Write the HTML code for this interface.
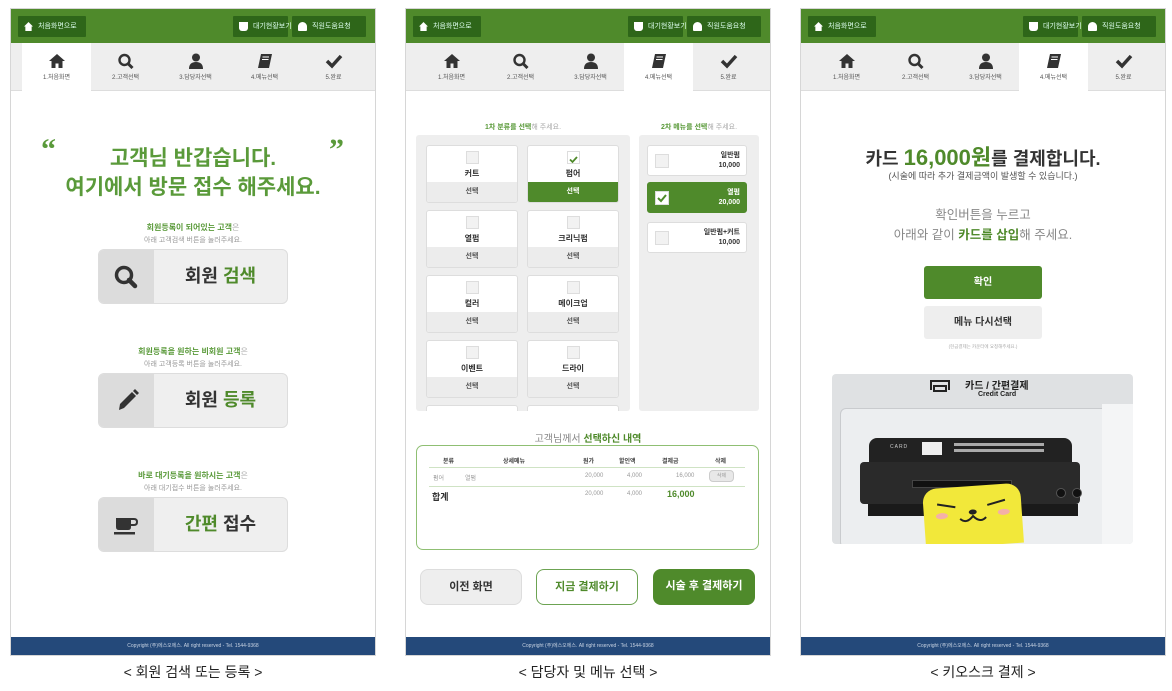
<!DOCTYPE html>
<html><head><meta charset="utf-8">
<style>
*{margin:0;padding:0;box-sizing:border-box}
body{width:1172px;height:691px;background:#fff;position:relative;overflow:hidden;font-family:"Liberation Sans","Noto Sans CJK KR",sans-serif;color:#333}
.a{position:absolute}
.panel{position:absolute;top:8px;width:366px;height:648px;border:1px solid #d6d6d6;background:#fff;overflow:hidden}
.hdr{position:absolute;left:0;top:0;width:100%;height:34px;background:#4f8a2b}
.hb{position:absolute;top:7px;height:21px;background:#2e6619;color:#dfe;font-size:7px;line-height:21px;padding-left:20px;border-radius:1px;white-space:nowrap}
.hb i{position:absolute;left:6px;top:6px;width:9px;height:9px;background:#fff}
.tabs{position:absolute;left:0;top:34px;width:100%;height:48px;background:#eeeeee;border-bottom:1px solid #ddd}
.tab{position:absolute;top:0;width:69px;height:48px;text-align:center;font-size:6px;color:#555}
.tab.on{background:#fff;height:49px}
.tab svg{display:block;margin:10px auto 3px}
.foot{position:absolute;left:0;bottom:0;width:100%;height:18px;background:#24497a;color:#c8d3e3;font-size:5px;line-height:18px;text-align:center}
.cap{position:absolute;top:662px;font-size:14px;color:#222;text-align:center;width:366px}
.g{color:#4f8a2b}
.bigbtn{position:absolute;left:87px;width:190px;height:55px;border:1px solid #ddd;border-radius:6px;background:#efefef;overflow:hidden}
.bigbtn .ic{position:absolute;left:0;top:0;width:55px;height:100%;background:#dcdcdc}
.bigbtn .t{position:absolute;left:55px;right:0;top:0;line-height:53px;text-align:center;font-size:18px;font-weight:bold;color:#333}
.sm1{position:absolute;left:0;width:100%;text-align:center;font-size:8px;font-weight:bold;color:#5a9a3a}
.sm1 span{color:#aaa;font-weight:normal}
.sm2{position:absolute;left:0;width:100%;text-align:center;font-size:7px;color:#999}
.card{position:absolute;width:92px;height:58px;background:#fff;border:1px solid #ddd;border-radius:3px;overflow:hidden;text-align:center}
.card .cb{position:absolute;left:39px;top:5px;width:13px;height:13px;border:1px solid #ddd;background:#f2f2f2}
.card .n{position:absolute;top:22px;width:100%;font-size:8px;font-weight:bold;color:#333}
.card .s{position:absolute;left:0;bottom:0;width:100%;height:20px;background:#ececec;font-size:7px;line-height:20px;font-weight:bold;color:#555}
.card.on .s{background:#4f8a2b;color:#fff}
.it{position:absolute;left:8px;width:100px;height:31px;background:#fff;border:1px solid #ddd;border-radius:3px;font-size:7px;font-weight:bold;text-align:right;padding:5px 6px 0 0;line-height:10px;color:#333}
.it .cb{position:absolute;left:7px;top:8px;width:14px;height:14px;border:1px solid #ddd;background:#f2f2f2}
.it.on{background:#4f8a2b;color:#fff;border-color:#4f8a2b}
.it.on .cb{background:#fff}
.row{position:absolute;left:0;width:100%;font-size:6px}
.row span{position:absolute}
.b3{position:absolute;top:560px;width:102px;height:36px;border-radius:8px;font-size:11px;font-weight:bold;text-align:center;line-height:34px}
</style></head><body>

<!-- PANEL 1 -->
<div class="panel" style="left:10px">
 <div class="hdr">
  <div class="hb" style="left:7px;width:68px"><i style="clip-path:polygon(50% 0,100% 50%,85% 50%,85% 100%,15% 100%,15% 50%,0 50%)"></i>처음화면으로</div>
  <div class="hb" style="left:222px;width:55px"><i style="border-radius:0 0 3px 3px"></i>대기현황보기</div>
  <div class="hb" style="left:281px;width:74px"><i style="border-radius:50% 50% 1px 1px"></i>직원도움요청</div>
 </div>
 <div class="tabs">
  <div class="tab on" style="left:11px"><svg width="18" height="16" viewBox="0 0 18 16"><path d="M9 1 L1 8 H3.5 V15 H7.5 V10.5 H10.5 V15 H14.5 V8 H17Z" fill="#333"/></svg>1.처음화면</div>
  <div class="tab" style="left:80px"><svg width="18" height="16" viewBox="0 0 18 16"><circle cx="7.5" cy="7" r="5" stroke="#333" stroke-width="2.4" fill="none"/><path d="M11 10.5 L15.5 15" stroke="#333" stroke-width="3"/></svg>2.고객선택</div>
  <div class="tab" style="left:150px"><svg width="18" height="16" viewBox="0 0 18 16"><circle cx="9" cy="4.5" r="4" fill="#333"/><path d="M2 16 Q2 9 9 9 Q16 9 16 16Z" fill="#333"/></svg>3.담당자선택</div>
  <div class="tab" style="left:219px"><svg width="18" height="16" viewBox="0 0 18 16"><path d="M5 1 H16 L13 15 H2Z" fill="#333"/><path d="M6.5 4 H13 M6 6.5 H12.5" stroke="#fff" stroke-width="1"/></svg>4.메뉴선택</div>
  <div class="tab" style="left:288px"><svg width="18" height="16" viewBox="0 0 18 16"><path d="M2 8 L7 13 L16 3" stroke="#333" stroke-width="3.5" fill="none"/></svg>5.완료</div>
 </div>
 <div class="a" style="left:30px;top:124px;font-size:30px;font-weight:bold;color:#5a9a3a;font-family:'Liberation Serif',serif">“</div>
 <div class="a" style="left:318px;top:124px;font-size:30px;font-weight:bold;color:#5a9a3a;font-family:'Liberation Serif',serif">”</div>
 <div class="a" style="left:0;width:100%;top:135px;text-align:center;font-size:21px;font-weight:bold;color:#5a9a3a;line-height:29px">고객님 반갑습니다.<br>여기에서 방문 접수 해주세요.</div>

 <div class="sm1" style="top:213px">회원등록이 되어있는 고객<span>은</span></div>
 <div class="sm2" style="top:226px">아래 고객검색 버튼을 눌러주세요.</div>
 <div class="bigbtn" style="top:240px"><div class="ic"><svg width="55" height="55" viewBox="0 0 55 55"><circle cx="25" cy="25" r="7.5" stroke="#333" stroke-width="3.5" fill="none"/><path d="M30 30 L36 36" stroke="#333" stroke-width="4.5" stroke-linecap="round"/></svg></div><div class="t">회원 <span class="g">검색</span></div></div>

 <div class="sm1" style="top:337px">회원등록을 원하는 비회원 고객<span>은</span></div>
 <div class="sm2" style="top:350px">아래 고객등록 버튼을 눌러주세요.</div>
 <div class="bigbtn" style="top:364px"><div class="ic"><svg width="55" height="55" viewBox="0 0 55 55"><path d="M20 36 L21 30 L33 18 L37 22 L25 34Z" fill="#333"/><path d="M34 17 L36 15 L40 19 L38 21Z" fill="#333"/></svg></div><div class="t">회원 <span class="g">등록</span></div></div>

 <div class="sm1" style="top:461px">바로 대기등록을 원하시는 고객<span>은</span></div>
 <div class="sm2" style="top:474px">아래 대기접수 버튼을 눌러주세요.</div>
 <div class="bigbtn" style="top:488px"><div class="ic"><svg width="55" height="55" viewBox="0 0 55 55"><path d="M17 20 H32 V29 Q32 32 29 32 H20 Q17 32 17 29Z" fill="#333"/><path d="M32 21 H35 Q38 21 38 24 Q38 27 35 27 H32" stroke="#333" stroke-width="2" fill="none"/><rect x="15" y="34" width="21" height="2.5" fill="#333"/></svg></div><div class="t"><span class="g">간편</span> 접수</div></div>

 <div class="foot">Copyright (주)에스오에스. All right reserved - Tel. 1544-9368</div>
</div>
<div class="cap" style="left:10px">&lt; 회원 검색 또는 등록 &gt;</div>

<!-- PANEL 2 -->
<div class="panel" style="left:405px">
 <div class="hdr">
  <div class="hb" style="left:7px;width:68px"><i style="clip-path:polygon(50% 0,100% 50%,85% 50%,85% 100%,15% 100%,15% 50%,0 50%)"></i>처음화면으로</div>
  <div class="hb" style="left:222px;width:55px"><i style="border-radius:0 0 3px 3px"></i>대기현황보기</div>
  <div class="hb" style="left:281px;width:74px"><i style="border-radius:50% 50% 1px 1px"></i>직원도움요청</div>
 </div>
 <div class="tabs">
  <div class="tab" style="left:11px"><svg width="18" height="16" viewBox="0 0 18 16"><path d="M9 1 L1 8 H3.5 V15 H7.5 V10.5 H10.5 V15 H14.5 V8 H17Z" fill="#333"/></svg>1.처음화면</div>
  <div class="tab" style="left:80px"><svg width="18" height="16" viewBox="0 0 18 16"><circle cx="7.5" cy="7" r="5" stroke="#333" stroke-width="2.4" fill="none"/><path d="M11 10.5 L15.5 15" stroke="#333" stroke-width="3"/></svg>2.고객선택</div>
  <div class="tab" style="left:150px"><svg width="18" height="16" viewBox="0 0 18 16"><circle cx="9" cy="4.5" r="4" fill="#333"/><path d="M2 16 Q2 9 9 9 Q16 9 16 16Z" fill="#333"/></svg>3.담당자선택</div>
  <div class="tab on" style="left:218px"><svg width="18" height="16" viewBox="0 0 18 16"><path d="M5 1 H16 L13 15 H2Z" fill="#333"/><path d="M6.5 4 H13 M6 6.5 H12.5" stroke="#fff" stroke-width="1"/></svg>4.메뉴선택</div>
  <div class="tab" style="left:288px"><svg width="18" height="16" viewBox="0 0 18 16"><path d="M2 8 L7 13 L16 3" stroke="#333" stroke-width="3.5" fill="none"/></svg>5.완료</div>
 </div>
 <div class="a" style="left:10px;width:214px;top:113px;text-align:center;font-size:7px;font-weight:bold;color:#5a9a3a">1차 분류를 선택<span style="color:#aaa;font-weight:normal">해 주세요.</span></div>
 <div class="a" style="left:233px;width:120px;top:113px;text-align:center;font-size:7px;font-weight:bold;color:#5a9a3a">2차 메뉴를 선택<span style="color:#aaa;font-weight:normal">해 주세요.</span></div>
 <div class="a" style="left:10px;top:126px;width:214px;height:276px;background:#eeeeee;border-radius:3px;overflow:hidden">
  <div class="card" style="left:10px;top:10px"><div class="cb"></div><div class="n">커트</div><div class="s">선택</div></div>
  <div class="card on" style="left:111px;top:10px"><div class="cb" style="background:#fff"><svg width="11" height="11" viewBox="0 0 11 11"><path d="M2 5.5 L4.5 8 L9 3" stroke="#4f8a2b" stroke-width="1.8" fill="none"/></svg></div><div class="n">펌어</div><div class="s">선택</div></div>
  <div class="card" style="left:10px;top:75px"><div class="cb"></div><div class="n">열펌</div><div class="s">선택</div></div>
  <div class="card" style="left:111px;top:75px"><div class="cb"></div><div class="n">크리닉펌</div><div class="s">선택</div></div>
  <div class="card" style="left:10px;top:140px"><div class="cb"></div><div class="n">컬러</div><div class="s">선택</div></div>
  <div class="card" style="left:111px;top:140px"><div class="cb"></div><div class="n">메이크업</div><div class="s">선택</div></div>
  <div class="card" style="left:10px;top:205px"><div class="cb"></div><div class="n">이벤트</div><div class="s">선택</div></div>
  <div class="card" style="left:111px;top:205px"><div class="cb"></div><div class="n">드라이</div><div class="s">선택</div></div>
  <div class="card" style="left:10px;top:270px"></div>
  <div class="card" style="left:111px;top:270px"></div>
 </div>
 <div class="a" style="left:233px;top:126px;width:120px;height:276px;background:#eeeeee;border-radius:3px">
  <div class="it" style="top:10px"><div class="cb"></div>일반펌<br>10,000</div>
  <div class="it on" style="top:47px"><div class="cb"><svg width="12" height="12" viewBox="0 0 12 12"><path d="M2 6 L5 9 L10 3" stroke="#4f8a2b" stroke-width="2" fill="none"/></svg></div>열펌<br>20,000</div>
  <div class="it" style="top:87px"><div class="cb"></div>일반펌+커트<br>10,000</div>
 </div>
 <div class="a" style="left:0;width:100%;top:421px;text-align:center;font-size:10px;color:#888">고객님께서 <b class="g">선택하신 내역</b></div>
 <div class="a" style="left:10px;top:436px;width:343px;height:105px;border:1.5px solid #8fbf73;border-radius:7px">
  <div class="row" style="top:10px;font-weight:bold;color:#444"><span style="left:26px">분류</span><span style="left:86px">상세메뉴</span><span style="left:166px">원가</span><span style="left:202px">할인액</span><span style="left:245px">결제금</span><span style="left:298px">삭제</span></div>
  <div class="a" style="left:12px;top:21px;width:316px;height:1px;background:#cfe3c4"></div>
  <div class="row" style="top:27px;color:#999"><span style="left:16px">펌어</span><span style="left:48px">열펌</span><span style="left:168px">20,000</span><span style="left:210px">4,000</span><span style="left:259px">16,000</span><span style="left:292px;top:-3px;width:25px;height:12px;background:#e8e8e8;border:1px solid #ccc;border-radius:4px;text-align:center;line-height:10px;font-size:5px">삭제</span></div>
  <div class="a" style="left:12px;top:40px;width:316px;height:1px;background:#cfe3c4"></div>
  <div class="row" style="top:45px;color:#999"><span style="left:15px;font-size:9px;font-weight:bold;color:#333;top:-1px">합계</span><span style="left:168px">20,000</span><span style="left:210px">4,000</span><span style="left:250px;font-size:9px;font-weight:bold;color:#4f8a2b;top:-2px">16,000</span></div>
 </div>
 <div class="b3" style="left:14px;background:#eeeeee;border:1px solid #ddd;color:#333">이전 화면</div>
 <div class="b3" style="left:130px;background:#fff;border:1.5px solid #6ca352;color:#4f8a2b">지금 결제하기</div>
 <div class="b3" style="left:247px;background:#4f8a2b;color:#fff">시술 후 결제하기</div>
 <div class="foot">Copyright (주)에스오에스. All right reserved - Tel. 1544-9368</div>
</div>
<div class="cap" style="left:405px">&lt; 담당자 및 메뉴 선택 &gt;</div>

<!-- PANEL 3 -->
<div class="panel" style="left:800px">
 <div class="hdr">
  <div class="hb" style="left:7px;width:68px"><i style="clip-path:polygon(50% 0,100% 50%,85% 50%,85% 100%,15% 100%,15% 50%,0 50%)"></i>처음화면으로</div>
  <div class="hb" style="left:222px;width:55px"><i style="border-radius:0 0 3px 3px"></i>대기현황보기</div>
  <div class="hb" style="left:281px;width:74px"><i style="border-radius:50% 50% 1px 1px"></i>직원도움요청</div>
 </div>
 <div class="tabs">
  <div class="tab" style="left:11px"><svg width="18" height="16" viewBox="0 0 18 16"><path d="M9 1 L1 8 H3.5 V15 H7.5 V10.5 H10.5 V15 H14.5 V8 H17Z" fill="#333"/></svg>1.처음화면</div>
  <div class="tab" style="left:80px"><svg width="18" height="16" viewBox="0 0 18 16"><circle cx="7.5" cy="7" r="5" stroke="#333" stroke-width="2.4" fill="none"/><path d="M11 10.5 L15.5 15" stroke="#333" stroke-width="3"/></svg>2.고객선택</div>
  <div class="tab" style="left:150px"><svg width="18" height="16" viewBox="0 0 18 16"><circle cx="9" cy="4.5" r="4" fill="#333"/><path d="M2 16 Q2 9 9 9 Q16 9 16 16Z" fill="#333"/></svg>3.담당자선택</div>
  <div class="tab on" style="left:218px"><svg width="18" height="16" viewBox="0 0 18 16"><path d="M5 1 H16 L13 15 H2Z" fill="#333"/><path d="M6.5 4 H13 M6 6.5 H12.5" stroke="#fff" stroke-width="1"/></svg>4.메뉴선택</div>
  <div class="tab" style="left:288px"><svg width="18" height="16" viewBox="0 0 18 16"><path d="M2 8 L7 13 L16 3" stroke="#333" stroke-width="3.5" fill="none"/></svg>5.완료</div>
 </div>
 <div class="a" style="left:0;width:100%;top:131px;text-align:center;font-size:18px;font-weight:bold;color:#333">카드 <span class="g" style="font-size:22px">16,000원</span>를 결제합니다.</div>
 <div class="a" style="left:0;width:100%;top:160px;text-align:center;font-size:9px;color:#555">(시술에 따라 추가 결제금액이 발생할 수 있습니다.)</div>
 <div class="a" style="left:0;width:100%;top:196px;text-align:center;font-size:12.5px;color:#888;line-height:20px">확인버튼을 누르고<br>아래와 같이 <b class="g">카드를 삽입</b>해 주세요.</div>
 <div class="a" style="left:123px;top:257px;width:118px;height:33px;background:#4f8a2b;border-radius:3px;color:#fff;font-size:10px;font-weight:bold;text-align:center;line-height:33px">확인</div>
 <div class="a" style="left:123px;top:297px;width:118px;height:33px;background:#eeeeee;border-radius:3px;color:#333;font-size:10px;font-weight:bold;text-align:center;line-height:33px">메뉴 다시선택</div>
 <div class="a" style="left:0;width:100%;top:335px;text-align:center;font-size:4.5px;color:#aaa">(현금결제는 카운터에 요청해주세요.)</div>
 <div class="a" style="left:31px;top:365px;width:301px;height:170px;background:#dfe1e3;border-radius:4px;overflow:hidden">
  <div class="a" style="left:98px;top:6px;width:20px;height:10px;border:2px solid #222;border-bottom:none"></div>
  <div class="a" style="left:101px;top:11px;width:14px;height:7px;border:2px solid #222"></div>
  <div class="a" style="left:133px;top:3px;font-size:10px;font-weight:bold;color:#222">카드 / 간편결제</div>
  <div class="a" style="left:146px;top:17px;font-size:7px;font-weight:bold;color:#222">Credit Card</div>
  <div class="a" style="left:8px;top:34px;width:290px;height:140px;background:#eceef0;border:1px solid #c9cbce;border-radius:6px"></div>
  <div class="a" style="left:270px;top:30px;width:35px;height:140px;background:#f4f5f6"></div>
  <div class="a" style="left:37px;top:64px;width:203px;height:26px;background:#222;border-radius:8px 8px 0 0"></div>
  <div class="a" style="left:58px;top:70px;font-size:5px;color:#ccc;letter-spacing:1px">CARD</div>
  <div class="a" style="left:90px;top:68px;width:20px;height:13px;background:#eee"></div>
  <div class="a" style="left:122px;top:69px;width:90px;height:3px;background:#aaa"></div>
  <div class="a" style="left:122px;top:75px;width:90px;height:3px;background:#aaa"></div>
  <div class="a" style="left:28px;top:88px;width:220px;height:42px;background:#2a2a2a;border-radius:4px"></div>
  <div class="a" style="left:36px;top:130px;width:210px;height:12px;background:#1a1a1a"></div>
  <div class="a" style="left:80px;top:106px;width:100px;height:8px;background:#111;border:1px solid #444"></div>
  <div class="a" style="left:224px;top:114px;width:10px;height:10px;background:#111;border-radius:50%;border:1px solid #555"></div>
  <div class="a" style="left:240px;top:114px;width:10px;height:10px;background:#111;border-radius:50%;border:1px solid #555"></div>
  <div class="a" style="left:92px;top:112px;width:98px;height:60px;background:#f2e83a;border-radius:14px 14px 0 0;transform:rotate(-4deg)">
   <svg width="98" height="50" viewBox="0 0 98 50"><path d="M14 16 L32 20 M64 20 L82 16" stroke="#222" stroke-width="2"/><ellipse cx="18" cy="28" rx="6" ry="3" fill="#f4b0a8"/><ellipse cx="80" cy="28" rx="6" ry="3" fill="#f4b0a8"/><ellipse cx="49" cy="26" rx="4" ry="2.5" fill="#222"/><path d="M36 32 Q42 38 49 30 Q56 38 62 32" stroke="#222" stroke-width="2" fill="none"/></svg>
  </div>
 </div>
 <div class="foot">Copyright (주)에스오에스. All right reserved - Tel. 1544-9368</div>
</div>
<div class="cap" style="left:800px">&lt; 키오스크 결제 &gt;</div>
</body></html>
